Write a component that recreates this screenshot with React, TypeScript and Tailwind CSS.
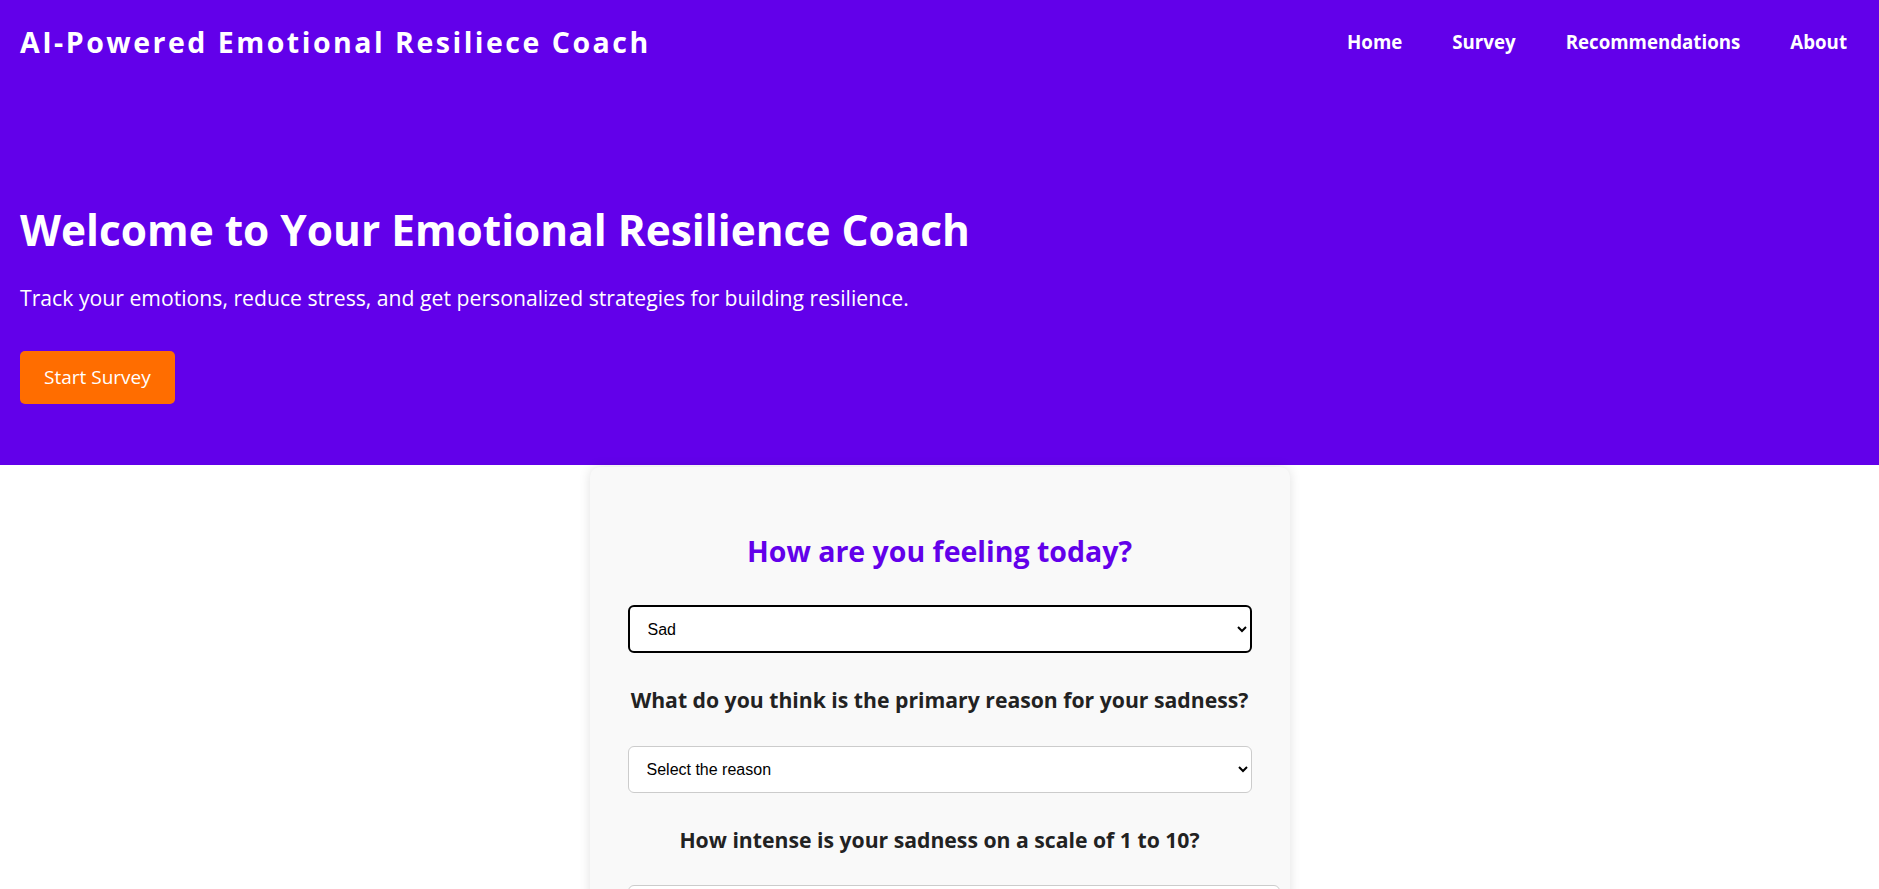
import React from "react";

export default function App() {
  const sans = { fontFamily: "'Segoe UI', 'Open Sans', 'Noto Sans', sans-serif" };
  return (
    <div className="min-h-screen bg-white" style={sans}>
      <header className="bg-[#6200ea] text-white">
        <nav className="flex h-[84px] items-center justify-between pl-[20px] pr-[32px]">
          <div className="text-[28.5px] font-bold tracking-[2.5px]">AI-Powered Emotional Resiliece Coach</div>
          <ul className="flex items-center gap-[50px] text-[18.7px] font-bold">
            <li>Home</li>
            <li>Survey</li>
            <li>Recommendations</li>
            <li>About</li>
          </ul>
        </nav>
        <section className="px-[20px] pt-[117px] pb-[61px]">
          <h1 className="text-[42.4px] font-bold leading-[58px]">Welcome to Your Emotional Resilience Coach</h1>
          <p className="mt-[24px] text-[21.2px] leading-[30px]">
            Track your emotions, reduce stress, and get personalized strategies for building resilience.
          </p>
          <button className="mt-[38px] h-[53px] rounded-[5px] bg-[#ff6d00] px-[24px] text-[19px] text-white">
            Start Survey
          </button>
        </section>
      </header>

      <main className="flex justify-center pt-[2px] pb-[40px]">
        <div className="w-[700px] rounded-[10px] bg-[#f9f9f9] px-[38px] pt-[66px] pb-[40px] shadow-[0_0_12px_rgba(0,0,0,0.12)]">
          <h2 className="text-center text-[28.5px] font-bold leading-[36px] text-[#6200ea]">How are you feeling today?</h2>
          <select
            defaultValue="sad"
            className="mt-[36px] block h-[48px] w-full rounded-[6px] border-2 border-black bg-white px-[14px] text-[16px] text-black"
            style={{ fontFamily: "'Liberation Sans', Arial, sans-serif" }}
          >
            <option value="">Select your mood</option>
            <option value="happy">Happy</option>
            <option value="sad">Sad</option>
            <option value="anxious">Anxious</option>
            <option value="angry">Angry</option>
          </select>

          <h3 className="mt-[32px] text-center text-[21.2px] font-bold leading-[30px] text-[#222]">
            What do you think is the primary reason for your sadness?
          </h3>
          <select
            defaultValue=""
            className="mt-[31px] block h-[47px] w-full rounded-[6px] border border-[#ccc] bg-white px-[14px] text-[16px] text-black"
            style={{ fontFamily: "'Liberation Sans', Arial, sans-serif" }}
          >
            <option value="">Select the reason</option>
            <option value="work">Work</option>
            <option value="relationships">Relationships</option>
            <option value="health">Health</option>
          </select>

          <h3 className="mt-[32px] text-center text-[21.2px] font-bold leading-[30px] text-[#222]">
            How intense is your sadness on a scale of 1 to 10?
          </h3>
          <input
            type="number"
            className="mt-[30px] block h-[46px] w-[652px] rounded-[6px] border border-[#ccc] bg-white px-[12px] text-[16px]"
            style={{ fontFamily: "'Liberation Sans', Arial, sans-serif" }}
          />
          <button className="mt-[30px] h-[48px] rounded-[5px] bg-[#ff6d00] px-[24px] text-[17px] text-white">
            Submit
          </button>
        </div>
      </main>
    </div>
  );
}
